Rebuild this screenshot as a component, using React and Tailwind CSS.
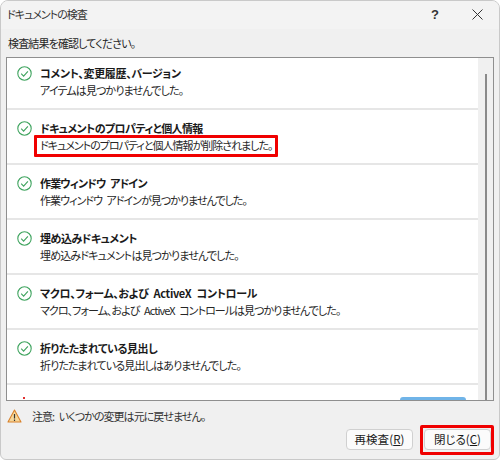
const rows = [
  { title: "コメント、変更履歴、バージョン", tt: "tracking-[-0.33px]", desc: "アイテムは見つかりませんでした。", dt: "tracking-[-0.85px]" },
  { title: "ドキュメントのプロパティと個人情報", tt: "tracking-[-0.6px]", desc: "ドキュメントのプロパティと個人情報が削除されました。", dt: "tracking-[-1px]", mark: true },
  { title: "作業ウィンドウ アドイン", tt: "tracking-[-0.85px]", desc: "作業ウィンドウ アドインが見つかりませんでした。", dt: "tracking-[-0.97px]" },
  { title: "埋め込みドキュメント", tt: "tracking-[-0.5px]", desc: "埋め込みドキュメントは見つかりませんでした。", dt: "tracking-[-0.85px]" },
  { title: "マクロ、フォーム、および ActiveX コントロール", tt: "tracking-[-0.35px]", desc: "マクロ、フォーム、および ActiveX コントロールは見つかりませんでした。", dt: "tracking-[-0.95px]" },
  { title: "折りたたまれている見出し", tt: "tracking-[-0.5px]", desc: "折りたたまれている見出しはありませんでした。", dt: "tracking-[-0.85px]" },
];

function Check() {
  return (
    <svg width="15" height="15" viewBox="0 0 15 15" fill="none" className="shrink-0">
      <circle cx="7.5" cy="7.5" r="6.7" stroke="#3fa45f" strokeWidth="1.1" />
      <path d="M4.2 7.7 6.6 10.1 10.9 5.4" stroke="#3fa45f" strokeWidth="1.1" />
    </svg>
  );
}

function Row({ title, tt, desc, dt, mark }) {
  return (
    <div className="relative h-[55px] shrink-0 border-b-2 border-[#e6e6e6] flex pl-[10px] pt-[9px] gap-[8px] [word-spacing:3px]">
      <div className="pt-[2px]"><Check /></div>
      <div className="flex flex-col">
        <div className={`h-[18px] leading-[18px] font-bold text-[#1a1a1a] text-[11px] whitespace-nowrap [font-feature-settings:'palt'] ${tt}`}>{title}</div>
        <div className={`h-[17px] leading-[17px] text-[#262626] text-[11px] whitespace-nowrap [font-feature-settings:'palt'] ${dt}`}>{desc}</div>
      </div>
      {mark && <div className="absolute left-[27px] top-[25px] w-[244px] h-[22px] border-[3px] border-[#f00000] rounded-[1px]" />}
    </div>
  );
}

export default function App() {
  return (
    <div className="w-[500px] h-[460px] bg-white font-['Noto_Sans_CJK_JP','Liberation_Sans',sans-serif]">
      <div className="w-[500px] h-[460px] rounded-t-[8px] rounded-b-[6px] border border-[#c9c9c9] bg-[#f0f0f0] flex flex-col overflow-hidden relative">
        <div className="h-[28px] shrink-0 bg-[#f3f3f3] flex items-center pl-[6px] pr-[16px] pb-[1px] text-[11px] text-[#333] [font-feature-settings:'palt']">
          <span className="flex-1 tracking-[-1px]">ドキュメントの検査</span>
          <span className="font-bold text-[13px] text-[#333] mr-[33px] font-['Liberation_Sans',sans-serif]">?</span>
          <svg width="11" height="11" viewBox="0 0 11 11" fill="none" className="-mt-[1px]"><path d="M.5.5l10 10M10.5.5l-10 10" stroke="#333" strokeWidth="1" /></svg>
        </div>
        <div className="h-[28px] shrink-0 flex items-center pl-[7px] text-[11px] tracking-[-0.85px] text-[#262626] [font-feature-settings:'palt']">検査結果を確認してください。</div>
        <div className="mx-[5px] h-[344px] shrink-0 border-[1px] border-[#8f8f8f] bg-white flex overflow-hidden">
          <div className="flex-1 flex flex-col -mt-[3px] overflow-hidden">
            {rows.map((r) => <Row key={r.title} {...r} />)}
            <div className="relative flex-1">
              <div className="absolute left-[16px] top-[12px] w-[2px] h-[2px] bg-[#e03030]" />
              <div className="absolute left-[393px] top-[12px] w-[66px] h-[6px] rounded-t-[3px] bg-[#70b4e8]" />
            </div>
          </div>
          <div className="w-[15px] shrink-0 bg-[#f0f0f0] flex justify-center pt-[16px]">
            <div className="w-[2px] h-full bg-[#8a8a8a]" />
          </div>
        </div>
        <div className="flex items-center gap-[10px] pl-[6px] h-[22px] mt-[4px] shrink-0 text-[11px] tracking-[-0.95px] [word-spacing:3px] text-[#333] [font-feature-settings:'palt']">
          <svg width="15" height="14" viewBox="0 0 15 14"><path d="M7.5 1 14 13H1Z" fill="#f6d79a" stroke="#d9822b" strokeWidth="1.1" strokeLinejoin="round" /><path d="M7.5 5v4.5M7.5 10.5v1.4" stroke="#333" strokeWidth="1.2" /></svg>
          <span>注意: いくつかの変更は元に戻せません。</span>
        </div>
        <div className="flex justify-end gap-[11px] pr-[8px] pt-[2px]">
          <button className="w-[67px] h-[21px] rounded-[4px] border border-[#d0d0d0] bg-[#fbfbfb] text-[11.5px] tracking-[0.1px] text-[#1a1a1a] [font-feature-settings:'palt']">再検査(<u>R</u>)</button>
          <div className="relative flex">
            <button className="w-[67px] h-[21px] rounded-[4px] border border-[#d0d0d0] bg-[#fbfbfb] text-[11.5px] text-[#1a1a1a] [font-feature-settings:'palt']">閉じる(<u>C</u>)</button>
            <div className="absolute -left-[4px] -top-[4px] w-[74px] h-[30px] border-[3px] border-[#f00000] rounded-[2px]" />
          </div>
        </div>
      </div>
    </div>
  );
}
